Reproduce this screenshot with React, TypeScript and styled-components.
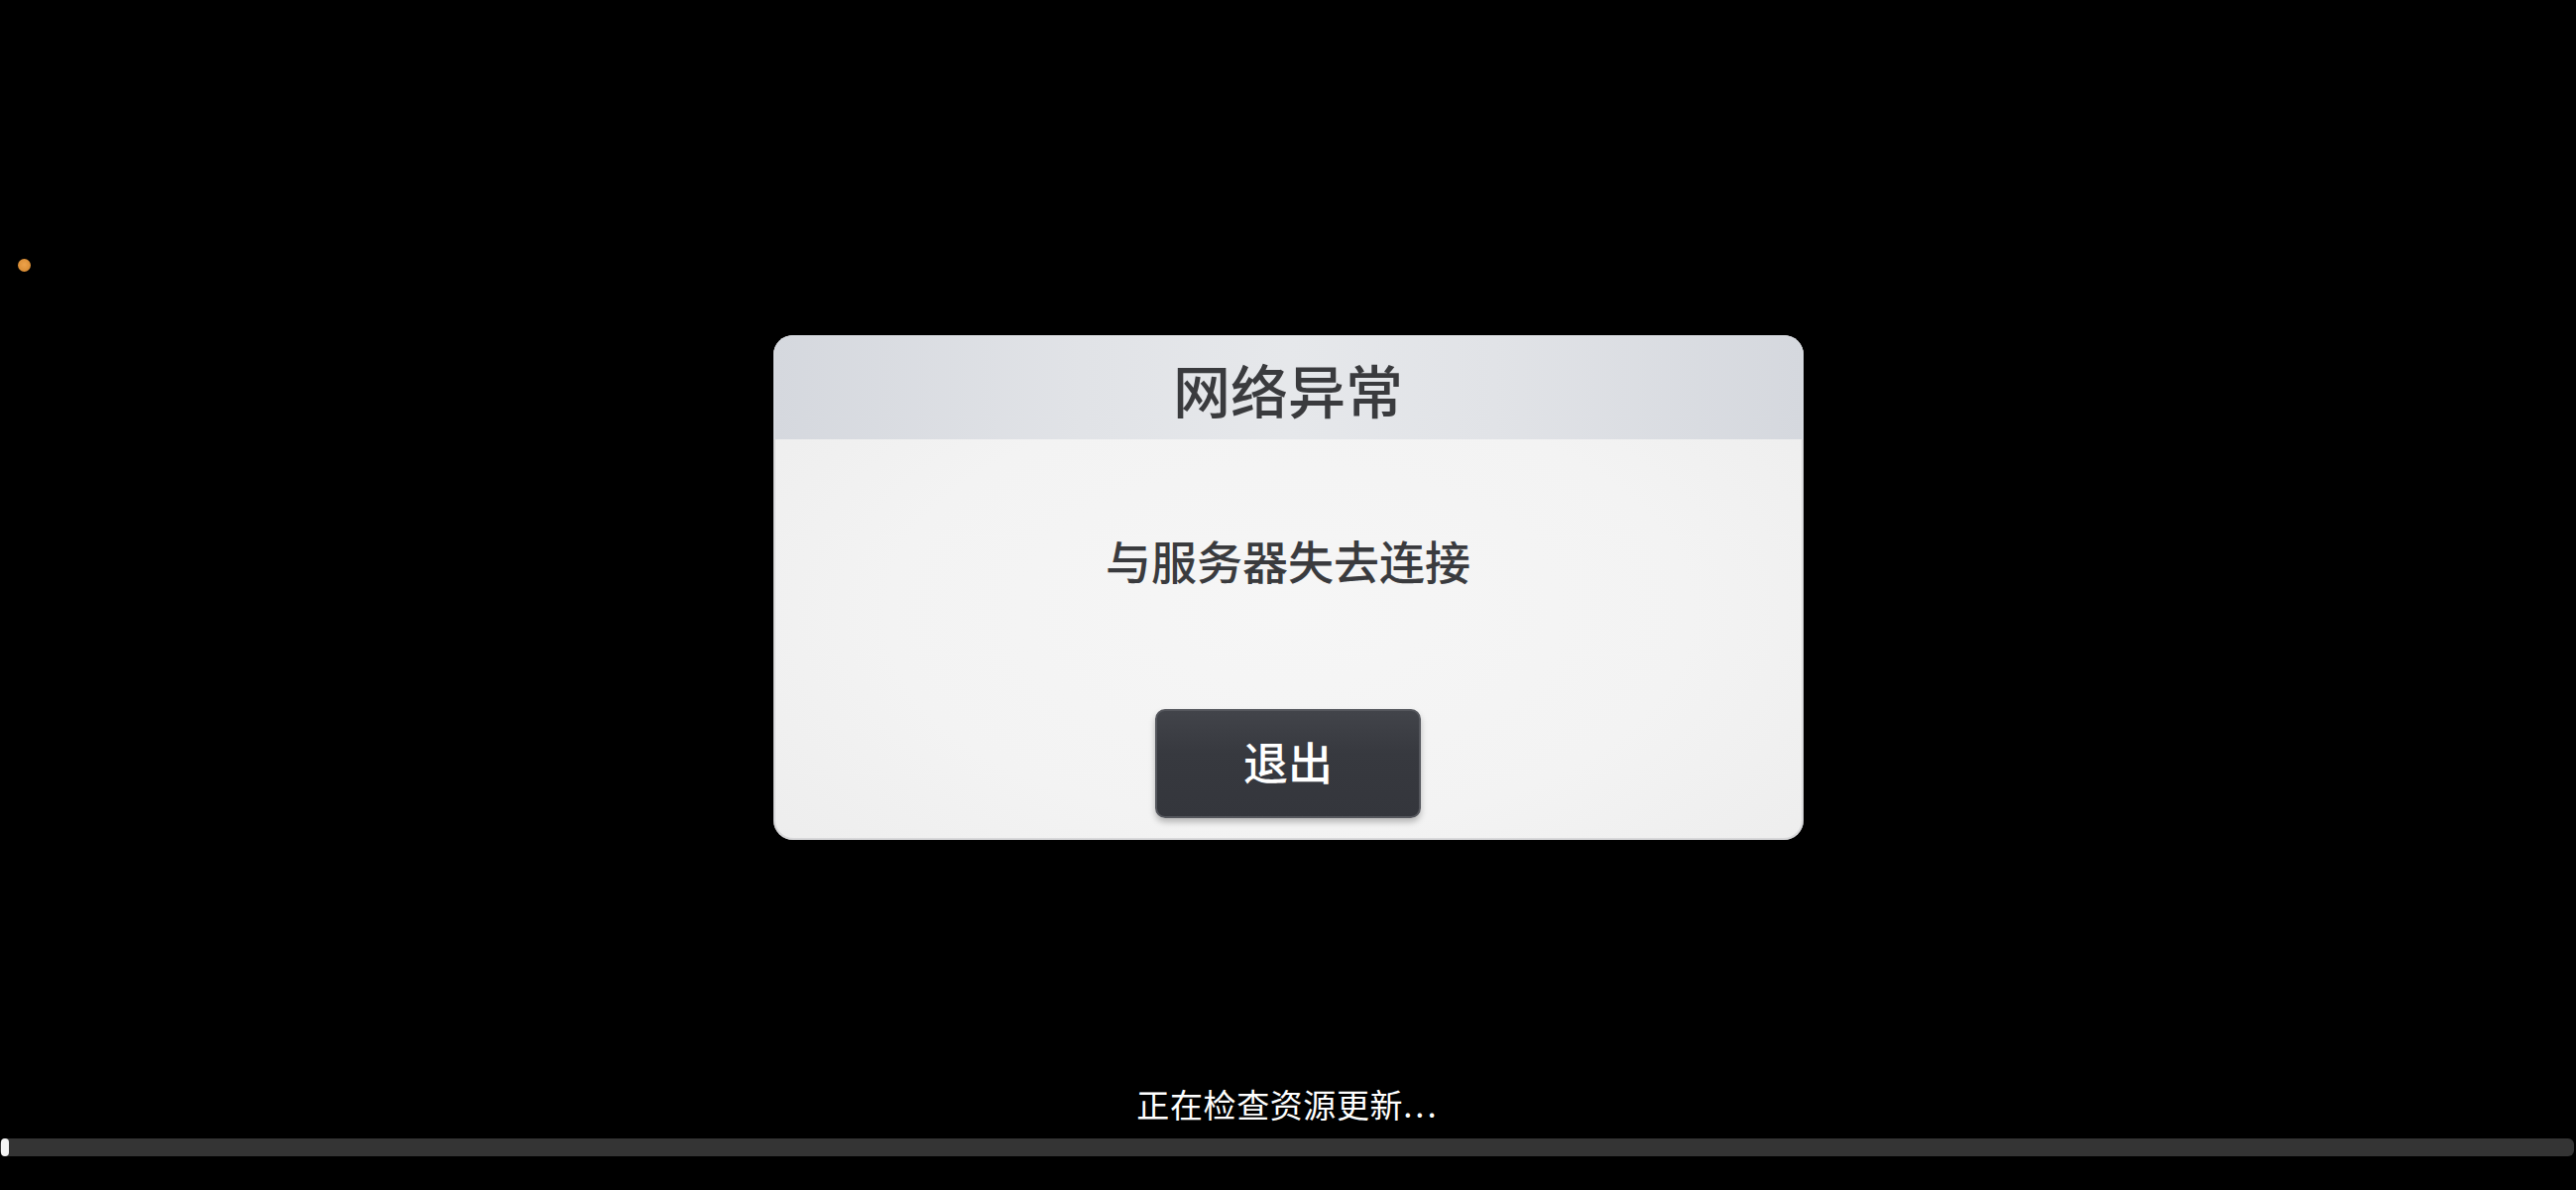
import React from "react";
import styled, { createGlobalStyle } from "styled-components";

const Global = createGlobalStyle`
  html, body { margin: 0; padding: 0; background: #000; }
  body { font-family: "Noto Sans CJK SC", "Noto Sans", sans-serif; }
`;

const Page = styled.div`
  position: relative;
  width: 2598px;
  height: 1200px;
  background: #000;
  display: flex;
  flex-direction: column;
  align-items: center;
  overflow: hidden;
`;

const StatusDot = styled.span`
  position: absolute;
  left: 18px;
  top: 261px;
  width: 13px;
  height: 13px;
  border-radius: 50%;
  background: radial-gradient(circle at 50% 45%, #eea24a 0%, #d98d35 70%, #b8742a 100%);
`;

const Dialog = styled.section`
  margin-top: 338px;
  width: 1039px;
  height: 509px;
  box-sizing: border-box;
  border-radius: 20px;
  overflow: hidden;
  display: flex;
  flex-direction: column;
  background: radial-gradient(ellipse at 50% 55%, #f6f6f6 0%, #f3f3f3 55%, #ececec 100%);
  box-shadow: inset 0 0 0 2px rgba(200, 200, 204, 0.6);
`;

const Header = styled.header`
  height: 105px;
  flex: none;
  display: flex;
  align-items: center;
  justify-content: center;
  padding-top: 2px;
  box-sizing: border-box;
  background: linear-gradient(90deg, #d5d8de 0%, #e1e3e7 30%, #e6e8eb 50%, #e1e3e7 70%, #d5d8de 100%);
`;

const Title = styled.h1`
  margin: 0;
  font-size: 58px;
  line-height: 70px;
  font-weight: 500;
  color: #3a3b3e;
`;

const Body = styled.div`
  flex: 1;
  display: flex;
  flex-direction: column;
  align-items: center;
  padding: 91px 0 22px;
  box-sizing: border-box;
`;

const Message = styled.p`
  margin: 0;
  font-size: 46px;
  line-height: 60px;
  font-weight: 500;
  color: #3a3b3e;
`;

const ExitButton = styled.button`
  margin-top: auto;
  width: 268px;
  height: 110px;
  border-radius: 10px;
  border: 2px solid #55575d;
  background: linear-gradient(180deg, #42444a 0%, #37393f 40%, #34363c 100%);
  box-shadow: 0 4px 6px rgba(0, 0, 0, 0.25);
  color: #ffffff;
  font-family: "Noto Sans CJK SC", "Noto Sans", sans-serif;
  font-size: 45px;
  font-weight: 500;
  line-height: 1;
  display: flex;
  align-items: center;
  justify-content: center;
  padding: 0 0 6px;
  cursor: pointer;
`;

const Spacer = styled.div`
  flex: 1;
`;

const Footer = styled.footer`
  width: 100%;
  display: flex;
  flex-direction: column;
  align-items: center;
  gap: 15px;
  padding-bottom: 34px;
`;

const StatusText = styled.div`
  font-size: 33px;
  line-height: 40px;
  color: #ffffff;
  font-weight: 400;
  letter-spacing: 0.6px;
`;

const Dots = styled.span`
  letter-spacing: 3px;
`;

const Track = styled.div`
  align-self: flex-start;
  width: 2596px;
  height: 18px;
  border-radius: 6px;
  background: #343434;
  display: flex;
  align-items: stretch;
  padding-left: 1px;
  box-sizing: border-box;
`;

const Fill = styled.div`
  border-radius: 4px;
  background: #f4f4f4;
`;

export default function App() {
  const progress = 0.003;
  return (
    <>
      <Global />
      <Page>
        <StatusDot />
        <Dialog>
          <Header>
            <Title>网络异常</Title>
          </Header>
          <Body>
            <Message>与服务器失去连接</Message>
            <ExitButton>退出</ExitButton>
          </Body>
        </Dialog>
        <Spacer />
        <Footer>
          <StatusText>
            正在检查资源更新<Dots>...</Dots>
          </StatusText>
          <Track>
            <Fill style={{ width: `${Math.max(8, progress * 2596)}px` }} />
          </Track>
        </Footer>
      </Page>
    </>
  );
}
